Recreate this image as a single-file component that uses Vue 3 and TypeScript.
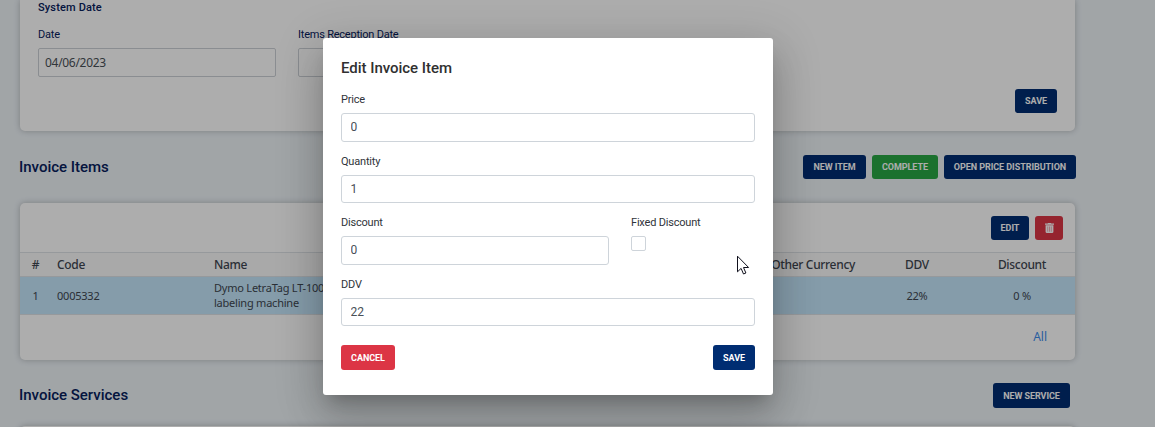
<script setup lang="ts">
import { ref } from 'vue'

interface InvoiceItem {
  index: number
  code: string
  name: string
  ddv: string
  discount: string
}

const items: InvoiceItem[] = [
  { index: 1, code: '0005332', name: 'Dymo LetraTag LT-100H labeling machine', ddv: '22%', discount: '0 %' },
]

const date = ref('04/06/2023')
const receptionDate = ref('')
const price = ref('0')
const quantity = ref('1')
const discount = ref('0')
const ddv = ref('22')
</script>

<template>
  <div class="screen">
    <main class="page">
      <section class="card dates">
        <h3>System Date</h3>
        <div class="date-row">
          <label class="field"><span class="cap">Date</span><input v-model="date" class="date-input" /></label>
          <label class="field"><span class="cap">Items Reception Date</span><input v-model="receptionDate" class="date-input" /></label>
        </div>
        <div class="card-actions"><button class="btn w42">SAVE</button></div>
      </section>

      <header class="section-head">
        <h2>Invoice Items</h2>
        <div class="actions">
          <button class="btn w63">NEW ITEM</button>
          <button class="btn green w66">COMPLETE</button>
          <button class="btn w132">OPEN PRICE DISTRIBUTION</button>
        </div>
      </header>

      <section class="card items">
        <div class="toolbar">
          <button class="btn w38">EDIT</button>
          <button class="btn red w28" aria-label="Delete">
            <svg width="9" height="10" viewBox="0 0 9 10">
              <path d="M0 .6h2.600l.6-.6h2.600l.6.6H9v1.200H0z" fill="#fff" />
              <path d="M.6 2.300h7.800v6.500c0 .7-.4 1.200-1 1.200H1.600c-.6 0-1-.5-1-1.200z" fill="#fff" />
              <path d="M2.700 3.500v5.200M4.500 3.500v5.200M6.300 3.500v5.200" stroke="#dc3545" stroke-width=".4" />
            </svg>
          </button>
        </div>
        <div class="grid head">
          <span class="mid">#</span><span>Code</span><span>Name</span><span class="right">Other Currency</span><span class="mid">DDV</span><span class="mid">Discount</span>
        </div>
        <div v-for="item in items" :key="item.index" class="grid row">
          <span class="mid">{{ item.index }}</span><span>{{ item.code }}</span><span class="name">{{ item.name }}</span><span></span><span class="mid">{{ item.ddv }}</span><span class="mid">{{ item.discount }}</span>
        </div>
        <div class="foot"><a>All</a></div>
      </section>

      <header class="section-head services">
        <h2>Invoice Services</h2>
        <div class="actions"><button class="btn w77">NEW SERVICE</button></div>
      </header>
      <section class="card next"></section>
    </main>

    <div class="overlay">
      <form class="dialog" @submit.prevent>
        <h1>Edit Invoice Item</h1>
        <label class="line"><span class="lab">Price</span><input v-model="price" /></label>
        <label class="line"><span class="lab">Quantity</span><input v-model="quantity" class="short" /></label>
        <div class="line split">
          <label><span class="lab">Discount</span><input v-model="discount" /></label>
          <label><span class="lab">Fixed Discount</span><span class="check"></span></label>
        </div>
        <label class="line"><span class="lab">DDV</span><input v-model="ddv" class="short" /></label>
        <div class="dialog-actions">
          <button class="btn red w54">CANCEL</button>
          <button class="btn w42">SAVE</button>
        </div>
      </form>
    </div>

    <svg class="cursor" width="13" height="21" viewBox="0 0 13 21">
      <path d="M.5 1.200v15.600l3.600-3.400 2.400 5.600 2.400-1-2.400-5.500h5.100z" fill="#fff" stroke="#10101c" stroke-width="1" />
    </svg>
  </div>
</template>

<style>
body {
  overflow: hidden;
}
</style>

<style scoped>
* {
  box-sizing: border-box;
}
.screen {
  position: relative;
  height: 427px;
  overflow: hidden;
  background: #edf3f7;
  font-family: Roboto, "Liberation Sans", sans-serif;
}
h1, h2, h3 {
  margin: 0;
  font-weight: 500;
}
.page {
  width: 1076px;
  padding-left: 19px;
}
.card {
  margin: 0 1px;
  background: #fff;
  border-radius: 5px;
  box-shadow: 0 0 6px rgba(0, 0, 0, 0.24);
}
.dates {
  height: 131px;
  padding: 1px 18px 0;
  border-radius: 0 0 5px 5px;
}
h3 {
  height: 26px;
  line-height: 14px;
  font-size: 11px;
  letter-spacing: 0.15px;
  color: #06205c;
}
.date-row {
  display: flex;
  gap: 22px;
}
.field {
  width: 238px;
}
.cap {
  display: block;
  height: 21px;
  line-height: 16px;
  font-size: 11px;
  letter-spacing: -0.22px;
  color: #06205c;
}
input {
  display: block;
  width: 100%;
  height: 29px;
  padding: 0 8.5px 1px;
  border: 1px solid #ced4da;
  border-radius: 3px;
  background: #fff;
  font: 12px Roboto, "Liberation Sans", sans-serif;
  color: #495057;
  outline: none;
}
.short {
  height: 28px;
  padding-bottom: 0;
}
.date-input {
  padding: 0 6px;
  border-radius: 2px;
  border-color: #ccd0d6;
  font: 12px "Noto Sans", sans-serif;
  letter-spacing: -0.3px;
}
.card-actions {
  display: flex;
  justify-content: flex-end;
  padding-top: 12px;
}
.btn {
  display: flex;
  align-items: center;
  justify-content: center;
  height: 24px;
  padding: 0;
  border: 0;
  border-radius: 3px;
  background: #002d72;
  color: #fff;
  font: 700 9px Roboto, "Liberation Sans", sans-serif;
  letter-spacing: -0.05px;
  white-space: nowrap;
}
.green { background: #28a745; }
.red { background: #dc3545; }
.w28 { width: 28px; }
.w38 { width: 38px; }
.w42 { width: 42px; }
.w54 { width: 54px; }
.w63 { width: 63px; }
.w66 { width: 66px; }
.w77 { width: 77px; height: 25px; }
.w132 { width: 132px; }
.section-head {
  display: flex;
  align-items: center;
  justify-content: space-between;
  height: 72px;
}
h2 {
  font-size: 15px;
  letter-spacing: -0.01px;
  color: #06205c;
}
.actions {
  display: flex;
  gap: 6px;
}
.items {
  height: 157px;
}
.toolbar {
  display: flex;
  justify-content: flex-end;
  align-items: center;
  gap: 6px;
  height: 49px;
  padding-right: 12px;
}
.grid {
  display: grid;
  grid-template-columns: 31px 157px 118px 524px 124px 86px;
  align-items: center;
  font: 12px "Noto Sans", sans-serif;
  letter-spacing: -0.32px;
  color: #3f4650;
}
.grid > :nth-child(2),
.grid > :nth-child(3) {
  padding-left: 6px;
}
.grid > :nth-child(3) {
  margin-right: -12px;
}
.grid > :nth-child(n + 4) {
  margin-right: -5px;
  margin-left: 5px;
}
.mid { text-align: center; }
.right { text-align: right; }
.head {
  height: 25px;
  background: #f9f9fa;
  border-top: 1px solid #dee2e6;
  border-bottom: 1px solid #dee2e6;
  font-weight: 500;
}
.row {
  height: 37px;
  padding-bottom: 1px;
  background: #c4e6fb;
  font-size: 11px;
  letter-spacing: -0.22px;
}
.name {
  line-height: 15px;
}
.foot {
  height: 46px;
  padding: 13px 28px 0 0;
  border-top: 1px solid #dee2e6;
  text-align: right;
  font: 12px "Noto Sans", sans-serif;
  color: #3d8bea;
}
.services {
  height: 66px;
  padding: 5px 6px 0 0;
}
.services h2 {
  padding-bottom: 2px;
}
.next {
  height: 20px;
}
.overlay {
  position: absolute;
  inset: 0;
  padding: 38px 0 0 323px;
  background: rgba(0, 0, 0, 0.32);
}
.dialog {
  width: 450px;
  height: 357px;
  padding: 20px 18px 0;
  border-radius: 3px;
  background: #fff;
  box-shadow: 0 11px 15px -7px rgba(0, 0, 0, 0.2), 0 24px 38px 3px rgba(0, 0, 0, 0.14), 0 9px 46px 8px rgba(0, 0, 0, 0.12);
}
h1 {
  height: 34px;
  line-height: 20px;
  font-size: 15px;
  letter-spacing: -0.03px;
  color: #303030;
}
.line {
  display: block;
  height: 61.6px;
}
.lab {
  display: block;
  height: 21px;
  line-height: 16px;
  font-size: 11px;
  letter-spacing: -0.2px;
  color: #30343a;
}
.split {
  display: grid;
  grid-template-columns: 268px 1fr;
  column-gap: 22px;
}
.check {
  display: block;
  width: 15px;
  height: 15px;
  border: 1px solid #ced4da;
  border-radius: 2px;
}
.dialog-actions {
  display: flex;
  justify-content: space-between;
  padding-top: 7px;
}
.dialog-actions .btn {
  height: 25px;
}
.cursor {
  position: absolute;
  left: 737px;
  top: 255px;
}
</style>
